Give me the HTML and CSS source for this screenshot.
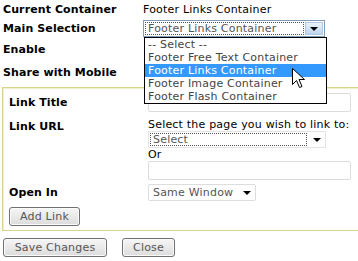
FILE: index.html
```html
<!DOCTYPE html>
<html lang="en">
<head>
    <meta charset="UTF-8">
    <title>Footer Container Settings</title>
    <link rel="stylesheet" href="styles.css">
</head>
<body>
    <div class="page">
        <div class="top">
            <div class="row r1"><span class="label">Current Container</span><span class="value">Footer Links Container</span></div>
            <div class="row r2">
                <span class="label">Main Selection</span>
                <div class="combo main-combo">
                    <div class="combo-text focus">Footer Links Container</div>
                    <div class="combo-btn xp"><span class="arrow"></span></div>
                    <ul class="dropdown">
                        <li>-- Select --</li>
                        <li>Footer Free Text Container</li>
                        <li class="active">Footer Links Container</li>
                        <li>Footer Image Container</li>
                        <li>Footer Flash Container</li>
                    </ul>
                    <svg class="cursor" width="13" height="21" viewBox="0 0 13 21">
                        <path d="M0.5 0.5 L0.5 16.5 L4.5 12.5 L7.5 19.5 L10 18.5 L7 11.5 L12.5 11.5 Z" fill="#fff" stroke="#000" stroke-width="1"/>
                    </svg>
                </div>
            </div>
            <div class="row r3"><span class="label">Enable</span></div>
            <div class="row r4"><span class="label">Share with Mobile</span></div>
        </div>

        <div class="box">
            <div class="frow r-title">
                <span class="label">Link Title</span>
                <div class="field wide"></div>
            </div>
            <div class="frow r-url">
                <span class="label">Link URL</span>
                <div class="stack">
                    <div class="hint">Select the page you wish to link to:</div>
                    <div class="combo page-combo">
                        <div class="combo-text focus">Select</div>
                        <div class="combo-btn"><span class="arrow"></span></div>
                    </div>
                    <div class="hint">Or</div>
                    <div class="field wide"></div>
                </div>
            </div>
            <div class="frow r-open">
                <span class="label">Open In</span>
                <div class="combo open-combo">
                    <div class="combo-text">Same Window</div>
                    <div class="combo-btn"><span class="arrow"></span></div>
                </div>
            </div>
            <button class="btn add-btn" type="button">Add Link</button>
        </div>

        <div class="actions">
            <button class="btn save-btn" type="button">Save Changes</button>
            <button class="btn close-btn" type="button">Close</button>
        </div>
    </div>
</body>
</html>
```

FILE: styles.css
```css
body {
    margin: 0;
    font-family: "DejaVu Sans", Verdana, sans-serif;
    font-size: 11px;
    letter-spacing: 0.2px;
    color: #000;
    background: #fff;
}
.page {
    width: 358px;
    height: 261px;
    overflow: hidden;
}
.label {
    font-weight: bold;
    letter-spacing: 0.1px;
}
.top {
    padding-left: 3px;
}
.row {
    display: grid;
    grid-template-columns: 140px 1fr;
    align-items: center;
}
.r1 { height: 19px; }
.r2 { height: 19px; }
.r3 { height: 23px; }
.r4 { height: 23px; }
.combo {
    position: relative;
    display: flex;
    height: 17px;
    box-sizing: border-box;
    border: 1px solid #ddd;
    background: #fff;
    color: #555;
}
.combo-text {
    flex: 1;
    margin: 1px;
    padding-left: 3px;
    line-height: 13px;
}
.combo-text.focus {
    outline: 1px dotted #555;
    outline-offset: -1px;
}
.combo-btn {
    width: 17px;
    display: flex;
    align-items: center;
    justify-content: center;
}
.combo-btn.xp {
    margin: 1px;
    width: 16px;
    border: 1px solid #b5c8dd;
    background: linear-gradient(#eaf3fd, #bdd5f0);
}
.arrow {
    width: 0;
    height: 0;
    border-left: 4px solid transparent;
    border-right: 4px solid transparent;
    border-top: 4px solid #000;
    margin-top: 1px;
}
.main-combo {
    width: 182px;
    border-color: #7f9db9;
}
.main-combo .combo-text {
    margin: 1px 0 1px 1px;
}
.dropdown {
    position: absolute;
    top: 16px;
    left: 0;
    width: 181px;
    margin: 0;
    padding: 0;
    list-style: none;
    background: #fff;
    border: 1px solid #000;
    color: #444;
    z-index: 2;
}
.dropdown li {
    height: 13px;
    line-height: 13px;
    padding-left: 3px;
}
.dropdown li.active {
    background: #3399ff;
    color: #fff;
}
.cursor {
    position: absolute;
    left: 148px;
    top: 47px;
    z-index: 3;
}
.box {
    margin: 3px -20px 0 2px;
    border: 1px solid #d8d48a;
    border-right: none;
    box-shadow: inset 1px 1px 0 #f2f0cc;
    padding: 4px 0 4px 6px;
}
.frow {
    display: grid;
    grid-template-columns: 139px 1fr;
}
.r-title {
    align-items: center;
    height: 20px;
}
.field {
    height: 19px;
    box-sizing: border-box;
    border: 1px solid #dcdcdc;
    border-radius: 2px;
    background: #fff;
}
.wide {
    width: 203px;
}
.r-url {
    margin-top: 6px;
}
.r-url .label {
    padding-top: 2px;
}
.hint {
    line-height: 13px;
}
.page-combo {
    width: 178px;
    height: 17px;
    border-color: #e4e4e4;
}
.r-open {
    align-items: center;
    margin-top: 4px;
    height: 17px;
}
.open-combo {
    width: 108px;
    border-radius: 2px;
}
.btn {
    display: block;
    font-family: "DejaVu Sans", Verdana, sans-serif;
    font-size: 11px;
    letter-spacing: 0.2px;
    color: #555;
    height: 19px;
    padding: 0;
    border: 1px solid #707070;
    border-radius: 3px;
    background: linear-gradient(#f6f6f6, #dcdcdc);
    box-shadow: inset 0 0 0 1px #fbfbfb;
}
.add-btn {
    margin-top: 6px;
    width: 71px;
}
.actions {
    display: flex;
    gap: 15px;
    padding: 7px 0 0 3px;
}
.save-btn {
    width: 104px;
}
.close-btn {
    width: 53px;
}
```
